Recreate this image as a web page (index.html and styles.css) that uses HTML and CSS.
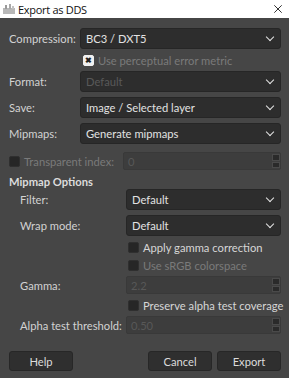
FILE: index.html
```html
<!DOCTYPE html>
<html lang="en">
<head>
    <meta charset="UTF-8">
    <title>Export as DDS</title>
    <link rel="stylesheet" href="styles.css">
</head>
<body>
    <div class="titlebar">
        <svg class="app-icon" width="12" height="10" viewBox="0 0 12 10">
            <rect x="0" y="4" width="12" height="6" fill="#b8b8b8"/>
            <rect x="2" y="1" width="2" height="4" fill="#9a9a9a"/>
            <rect x="6" y="0" width="2" height="5" fill="#a8a8a8"/>
            <rect x="9" y="2" width="2" height="3" fill="#c4c4c4"/>
        </svg>
        <span class="title">Export as DDS</span>
        <svg class="close" width="8" height="8" viewBox="0 0 8 8">
            <path d="M0.3 0.3 L7.7 7.7 M7.7 0.3 L0.3 7.7" stroke="#333" stroke-width="1"/>
        </svg>
    </div>

    <div class="dialog">
        <div class="row r-compression">
            <span class="label">Compression:</span>
            <div class="combo wide">BC3 / DXT5<span class="chev"></span></div>
        </div>
        <div class="check-row r-perceptual indent-a">
            <span class="box checked">&#x2716;</span>
            <span class="check-text disabled">Use perceptual error metric</span>
        </div>
        <div class="row r-format">
            <span class="label">Format:</span>
            <div class="combo wide muted">Default<span class="chev"></span></div>
        </div>
        <div class="row r-save">
            <span class="label">Save:</span>
            <div class="combo wide">Image / Selected layer<span class="chev"></span></div>
        </div>
        <div class="row r-mipmaps">
            <span class="label">Mipmaps:</span>
            <div class="combo wide">Generate mipmaps<span class="chev"></span></div>
        </div>
        <div class="row r-transparent">
            <span class="box"></span>
            <span class="check-text disabled">Transparent index:</span>
            <div class="spin trans">0<span class="spin-btns"><i></i><i></i></span></div>
        </div>

        <div class="heading">Mipmap Options</div>

        <div class="row sub r-filter">
            <span class="label">Filter:</span>
            <div class="combo narrow">Default<span class="chev"></span></div>
        </div>
        <div class="row sub r-wrap">
            <span class="label">Wrap mode:</span>
            <div class="combo narrow">Default<span class="chev"></span></div>
        </div>
        <div class="check-row indent-b r-gamma-corr">
            <span class="box"></span>
            <span class="check-text">Apply gamma correction</span>
        </div>
        <div class="check-row indent-b r-srgb">
            <span class="box"></span>
            <span class="check-text disabled">Use sRGB colorspace</span>
        </div>
        <div class="row sub r-gamma">
            <span class="label">Gamma:</span>
            <div class="spin narrow">2.2<span class="spin-btns"><i></i><i></i></span></div>
        </div>
        <div class="check-row indent-b r-preserve">
            <span class="box"></span>
            <span class="check-text">Preserve alpha test coverage</span>
        </div>
        <div class="row sub r-alpha">
            <span class="label">Alpha test threshold:</span>
            <div class="spin narrow">0.50<span class="spin-btns"><i></i><i></i></span></div>
        </div>

        <div class="buttons">
            <button class="btn">Help</button>
            <span class="spacer"></span>
            <button class="btn">Cancel</button>
            <button class="btn">Export</button>
        </div>
    </div>
</body>
</html>
```

FILE: styles.css
```css
body {
    margin: 0;
    width: 289px;
    height: 378px;
    background: #464646;
    font-family: Lato, 'Noto Sans', sans-serif;
    font-size: 11.2px;
    color: #d2d2d2;
    overflow: hidden;
}

.titlebar {
    height: 18px;
    background: #fff;
    display: flex;
    align-items: center;
    padding: 0 0 0 3px;
    font-family: 'Open Sans', 'Noto Sans', sans-serif;
    font-size: 11px;
    color: #111;
}

.app-icon {
    margin-right: 3px;
}

.title {
    flex: 1;
    letter-spacing: -0.3px;
}

.close {
    margin-right: 7px;
}

.dialog {
    padding: 10px 8px 0 9px;
}

.row {
    display: flex;
    align-items: center;
    height: 21px;
    white-space: nowrap;
}

.row .label {
    width: 71px;
    flex-shrink: 0;
}

.row.sub {
    padding-left: 11px;
}

.row.sub .label {
    width: 106px;
}

.combo {
    flex: 1;
    height: 21px;
    box-sizing: border-box;
    background: #2d2d2d;
    border: 1px solid #262626;
    border-radius: 3px;
    display: flex;
    align-items: center;
    padding-left: 5px;
    color: #e2e2e2;
    position: relative;
}

.combo.muted {
    color: #595959;
}

.chev {
    position: absolute;
    right: 7px;
    top: 5px;
    width: 5px;
    height: 5px;
    border-right: 1.6px solid #e4e4e4;
    border-bottom: 1.6px solid #e4e4e4;
    transform: rotate(45deg);
}

.check-row {
    display: flex;
    align-items: center;
    height: 14px;
    white-space: nowrap;
}

.indent-a {
    padding-left: 74px;
}

.indent-b {
    padding-left: 119px;
}

.box {
    width: 9px;
    height: 9px;
    border-radius: 2px;
    background: #262626;
    border: 1px solid #2f2f2f;
    margin-right: 4px;
    flex-shrink: 0;
}

.box.checked {
    background: #f0f0f0;
    border-color: #f0f0f0;
    color: #222;
    font-size: 8px;
    line-height: 9px;
    text-align: center;
    font-weight: bold;
}

.check-text {
    color: #d6d6d6;
}

.disabled {
    color: #7a7a7a;
}

.spin {
    flex: 1;
    height: 18px;
    box-sizing: border-box;
    background: #3d3d3d;
    border: 1px solid #393939;
    border-radius: 2px;
    color: #585858;
    display: flex;
    align-items: center;
    padding-left: 4px;
    position: relative;
}

.spin.trans {
    margin-left: 9px;
}

.spin-btns {
    position: absolute;
    right: 0;
    top: 0;
    bottom: 0;
    width: 8px;
    display: flex;
    flex-direction: column;
    gap: 1px;
    padding: 1px 0;
    box-sizing: border-box;
}

.spin-btns i {
    flex: 1;
    background: #2a2a2a;
    border: 1px solid #4a4a4a;
}

.r-perceptual { margin-top: 4px; }
.r-format { margin-top: 4px; }
.r-save { margin-top: 5px; }
.r-mipmaps { margin-top: 5px; }
.r-transparent { margin-top: 8px; height: 18px; }

.heading {
    font-weight: bold;
    height: 14px;
    line-height: 14px;
    margin-top: 5px;
    color: #dcdcdc;
}

.r-filter { margin-top: 0; }
.r-wrap { margin-top: 5px; }
.r-gamma-corr { margin-top: 4px; }
.r-srgb { margin-top: 4px; }
.r-gamma { margin-top: 4px; height: 18px; }
.r-preserve { margin-top: 4px; }
.r-alpha { margin-top: 4px; height: 18px; }

.buttons {
    display: flex;
    margin-top: 17px;
    gap: 5px;
}

.spacer {
    flex: 1;
}

.btn {
    width: 64px;
    height: 20px;
    background: #2f2f2f;
    border: 1px solid #272727;
    border-radius: 3px;
    color: #dcdcdc;
    font-family: Lato, 'Noto Sans', sans-serif;
    font-size: 11.2px;
    padding: 0;
}
```
